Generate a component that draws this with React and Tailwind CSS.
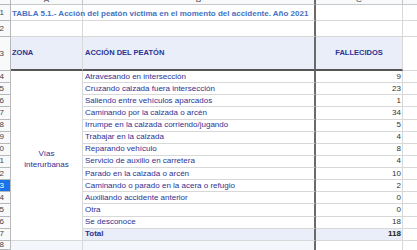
import React from 'react';

const rows = [
  ['Atravesando en intersección', 9],
  ['Cruzando calzada fuera intersección', 23],
  ['Saliendo entre vehículos aparcados', 1],
  ['Caminando por la calzada o arcén', 34],
  ['Irrumpe en la calzada corriendo/jugando', 5],
  ['Trabajar en la calzada', 4],
  ['Reparando vehículo', 8],
  ['Servicio de auxilio en carretera', 4],
  ['Parado en la calzada o arcén', 10],
  ['Caminando o parado en la acera o refugio', 2],
  ['Auxiliando accidente anterior', 0],
  ['Otra', 0],
  ['Se desconoce', 18],
];

const grid = 'border-r border-b border-[#d8d8d8]';

const RowHead = ({ n, selected }) => (
  <div
    className={`h-full overflow-hidden whitespace-nowrap text-right pr-[6px] text-[8px] leading-none flex items-center justify-end border-r border-b border-[#b8b8b8] ${
      selected ? 'bg-[#1a73e8] text-white' : 'bg-[#f8f9fa] text-[#444]'
    }`}
  >
    {n}
  </div>
);

const App = () => {
  return (
    <div
      className="w-[417px] h-[250px] overflow-hidden bg-white"
      style={{ fontFamily: '"Liberation Sans", Arial, sans-serif' }}
    >
      <div className="grid grid-cols-[11px_72px_233px_87px_14px] grid-rows-[5px_16px_16px_34px_repeat(14,12.14px)_9px]">
        {/* column letters, scrolled so only their feet show */}
        <div className="bg-[#f8f9fa] border-r border-b border-[#b8b8b8]" />
        <div className="bg-[#f8f9fa] border-r border-b border-[#c8c8c8] text-[8px] text-center leading-[0px] text-[#444]">A</div>
        <div className="bg-[#f8f9fa] border-r-2 border-r-[#6a6a6a] border-b border-b-[#c8c8c8] text-[8px] text-center leading-[0px] text-[#444]">B</div>
        <div className="bg-[#f8f9fa] border-r border-b border-[#c8c8c8] text-[8px] text-center leading-[0px] text-[#444]">C</div>
        <div className="bg-[#f8f9fa] border-b border-[#c8c8c8]" />

        {/* row 1 */}
        <RowHead n="1" />
        <div className={`${grid} relative`}>
          <span className="absolute left-[1px] top-[3px] z-10 whitespace-nowrap text-[8px] font-bold text-[#4472c4]">
            TABLA 5.1.- Acción del peatón víctima en el momento del accidente. Año 2021
          </span>
        </div>
        <div className="border-r-2 border-r-[#6a6a6a] border-b border-b-[#d8d8d8]" />
        <div className={grid} />
        <div className="border-b border-[#d8d8d8]" />

        {/* row 2 */}
        <RowHead n="2" />
        <div className={grid} />
        <div className="border-r-2 border-r-[#6a6a6a] border-b border-b-[#d8d8d8]" />
        <div className={grid} />
        <div className="border-b border-[#d8d8d8]" />

        {/* row 3 header */}
        <RowHead n="3" />
        <div className="bg-[#e9eef8] border-r border-r-[#d8d8d8] border-b-2 border-b-[#555] flex items-center pl-[1px] text-[7.5px] font-bold text-[#2e3192]">
          ZONA
        </div>
        <div className="bg-[#e9eef8] border-r-2 border-r-[#6a6a6a] border-b-2 border-b-[#555] flex items-center pl-[2px] text-[7.5px] font-bold text-[#2e3192]">
          ACCIÓN DEL PEATÓN
        </div>
        <div className="bg-[#e9eef8] border-r border-r-[#d8d8d8] border-b-2 border-b-[#555] flex items-center justify-center text-[7.5px] font-bold text-[#2e3192]">
          FALLECIDOS
        </div>
        <div className="border-b border-[#d8d8d8]" />

        {/* merged zone cell A4:A17 */}
        <div className="col-start-2 row-start-5 row-span-14 border-r border-b border-[#d8d8d8] flex items-center justify-center text-center text-[8px] leading-[11px] text-[#2e3192] pt-[7px]">
          Vías
          <br />
          interurbanas
        </div>

        {rows.map(([label, value], i) => (
          <React.Fragment key={label}>
            <div className="col-start-1 overflow-hidden" style={{ gridRow: i + 5 }}>
              <RowHead n={String(i + 4)} selected={i + 4 === 13} />
            </div>
            <div
              className="col-start-3 border-r-2 border-r-[#6a6a6a] border-b border-b-[#d8d8d8] flex items-center pl-[2px] text-[8px] whitespace-nowrap text-[#2e3192]"
              style={{ gridRow: i + 5 }}
            >
              {label}
            </div>
            <div
              className={`col-start-4 ${grid} flex items-center justify-end pr-[1px] text-[8px] text-[#333]`}
              style={{ gridRow: i + 5 }}
            >
              {value}
            </div>
            <div className="col-start-5 border-b border-[#d8d8d8]" style={{ gridRow: i + 5 }} />
          </React.Fragment>
        ))}

        {/* total row 17 */}
        <div className="col-start-1 row-start-18 overflow-hidden">
          <RowHead n="17" />
        </div>
        <div className="col-start-3 row-start-18 bg-[#e9eef8] border-r-2 border-r-[#6a6a6a] border-b border-b-[#d8d8d8] flex items-center pl-[2px] text-[8px] font-bold text-[#2e3192]">
          Total
        </div>
        <div className="col-start-4 row-start-18 bg-[#e9eef8] border-r border-b border-[#d8d8d8] flex items-center justify-end pr-[1px] text-[8px] font-bold text-[#222]">
          118
        </div>
        <div className="col-start-5 row-start-18 border-b border-[#d8d8d8]" />

        {/* row 18 */}
        <div className="col-start-1 row-start-19 overflow-hidden">
          <RowHead n="18" />
        </div>
        <div className="col-start-2 row-start-19 bg-[#f3f6fb] border-r border-[#d8d8d8]" />
        <div className="col-start-3 row-start-19 bg-[#f3f6fb] border-r-2 border-r-[#6a6a6a]" />
        <div className="col-start-4 row-start-19 border-r border-[#d8d8d8]" />
        <div className="col-start-5 row-start-19" />
      </div>
    </div>
  );
};

export default App;
